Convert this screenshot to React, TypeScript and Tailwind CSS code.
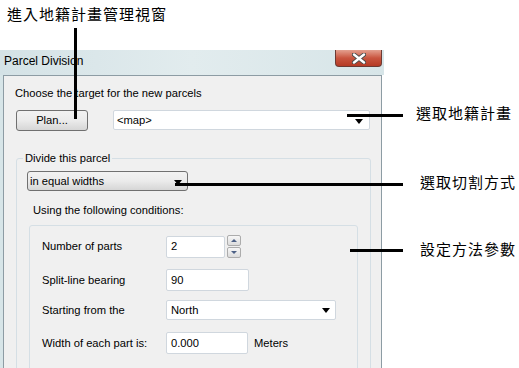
import React from "react";

const ui = { fontFamily: '"Liberation Sans", Arial, sans-serif' };
const cjk = { fontFamily: '"Noto Sans CJK TC", "Noto Sans CJK SC", sans-serif' };

function DownArrow({ className = "" }: { className?: string }) {
  return (
    <svg width="8" height="5" viewBox="0 0 8 5" className={className}>
      <path d="M0 0 H8 L4 5 Z" fill="#000" />
    </svg>
  );
}

function Spinner() {
  return (
    <div className="ml-[2px] flex flex-col gap-[1px] self-start">
      <div className="flex h-[11px] w-[14px] items-center justify-center rounded-[2px] border border-[#acacac] bg-gradient-to-b from-[#f7f7f7] to-[#dcdcdc]">
        <svg width="6" height="3" viewBox="0 0 6 3">
          <path d="M0 3 H6 L3 0 Z" fill="#4d6185" />
        </svg>
      </div>
      <div className="flex h-[11px] w-[14px] items-center justify-center rounded-[2px] border border-[#acacac] bg-gradient-to-b from-[#f7f7f7] to-[#dcdcdc]">
        <svg width="6" height="3" viewBox="0 0 6 3">
          <path d="M0 0 H6 L3 3 Z" fill="#4d6185" />
        </svg>
      </div>
    </div>
  );
}

export default function App() {
  return (
    <div className="relative h-[368px] w-[519px] overflow-hidden bg-white text-black" style={ui}>
      <div className="pt-[50px]">
        <div className="w-[384px]">
          {/* title bar */}
          <div className="flex h-[25px] bg-gradient-to-r from-[#d4e2e6] via-[#e2ecee] to-[#d7e5e8]">
            <span className="pl-[4px] pt-[4px] text-[12px] leading-[15px] text-black">Parcel Division</span>
            <div className="ml-auto mr-[2px] flex h-[17px] w-[47px] items-center justify-center rounded-b-[4px] border border-t-0 border-[#6d3a33] bg-gradient-to-b from-[#e3a08f] via-[#c9553f] to-[#b53a25]">
              <svg width="14" height="11" viewBox="0 0 14 11">
                <path d="M2 1.5 L12 9.5 M12 1.5 L2 9.5" stroke="#4a4a4a" strokeWidth="4.2" strokeLinecap="round" />
                <path d="M2 1.5 L12 9.5 M12 1.5 L2 9.5" stroke="#ffffff" strokeWidth="2.4" strokeLinecap="round" />
              </svg>
            </div>
          </div>
          <div className="flex">
            <div className="w-[3px] bg-[#d7e5e8]" />
            <div className="h-[300px] w-[379px] border border-[#8d9ca4] bg-[#f0f0f0] text-[11.2px] leading-[15px]">
              <div className="pl-[11px] pt-[10px]">Choose the target for the new parcels</div>
              <div className="mt-[9px] flex items-start">
                <div className="ml-[12px] flex h-[21px] w-[72px] items-center justify-center rounded-[3px] border border-[#707070] bg-gradient-to-b from-[#f2f2f2] via-[#ebebeb] to-[#d6d6d6]">
                  Plan...
                </div>
                <div className="ml-[25px] flex h-[20px] w-[257px] items-center rounded-[2px] border border-[#d0d7de] bg-white pl-[3px] pr-[6px]">
                  <span>&lt;map&gt;</span>
                  <DownArrow className="ml-auto mt-[3px]" />
                </div>
              </div>
              <fieldset className="ml-[12px] mt-[20px] w-[355px] rounded-[3px] border border-[#d5dfe5] pb-[10px] pl-[10px] pr-[11px]">
                <legend className="ml-[-4px] px-[2px] text-[11.2px] leading-[15px]">Divide this parcel</legend>
                <div className="mt-[5px] flex h-[20px] w-[161px] items-center rounded-[3px] border border-[#707070] bg-gradient-to-b from-[#f2f2f2] via-[#ebebeb] to-[#d6d6d6] pl-[2px] pr-[5px]">
                  <span>in equal widths</span>
                  <DownArrow className="ml-auto mt-[2px]" />
                </div>
                <div className="ml-[6px] mt-[12px]">Using the following conditions:</div>
                <div className="ml-[2px] mt-[7px] h-[160px] w-[329px] rounded-[3px] border border-[#d5dfe5] pl-[12px] pt-[9px]">
                  <div className="flex items-center">
                    <div className="w-[124px]">Number of parts</div>
                    <div className="flex h-[22px] w-[59px] items-center rounded-[2px] border border-[#d0d7de] bg-white pl-[4px]">2</div>
                    <Spinner />
                  </div>
                  <div className="mt-[11px] flex items-center">
                    <div className="w-[124px]">Split-line bearing</div>
                    <div className="flex h-[22px] w-[83px] items-center rounded-[2px] border border-[#d0d7de] bg-white pl-[4px]">90</div>
                  </div>
                  <div className="mt-[9px] flex items-center">
                    <div className="w-[124px]">Starting from the</div>
                    <div className="flex h-[20px] w-[170px] items-center rounded-[2px] border border-[#d0d7de] bg-white pl-[4px] pr-[5px]">
                      <span>North</span>
                      <DownArrow className="ml-auto mt-[1px]" />
                    </div>
                  </div>
                  <div className="mt-[12px] flex items-center">
                    <div className="w-[124px]">Width of each part is:</div>
                    <div className="flex h-[22px] w-[82px] items-center rounded-[2px] border border-[#d0d7de] bg-white pl-[4px]">0.000</div>
                    <span className="ml-[6px]">Meters</span>
                  </div>
                </div>
              </fieldset>
            </div>
          </div>
        </div>
      </div>

      {/* annotations */}
      <div className="absolute left-[7px] top-[6px] text-[15px] leading-[16px] tracking-[1px]" style={cjk}>進入地籍計畫管理視窗</div>
      <div className="absolute left-[74px] top-[28px] h-[91px] w-[3px] bg-black" />
      <div className="absolute left-[347px] top-[114px] h-[3px] w-[56px] bg-black" />
      <div className="absolute left-[416px] top-[105px] text-[15px] leading-[16px] tracking-[1px]" style={cjk}>選取地籍計畫</div>
      <div className="absolute left-[175px] top-[183px] h-[3px] w-[228px] bg-black" />
      <div className="absolute left-[420px] top-[174px] text-[15px] leading-[16px] tracking-[1px]" style={cjk}>選取切割方式</div>
      <div className="absolute left-[350px] top-[249px] h-[3px] w-[53px] bg-black" />
      <div className="absolute left-[420px] top-[241px] text-[15px] leading-[16px] tracking-[1px]" style={cjk}>設定方法參數</div>
    </div>
  );
}
